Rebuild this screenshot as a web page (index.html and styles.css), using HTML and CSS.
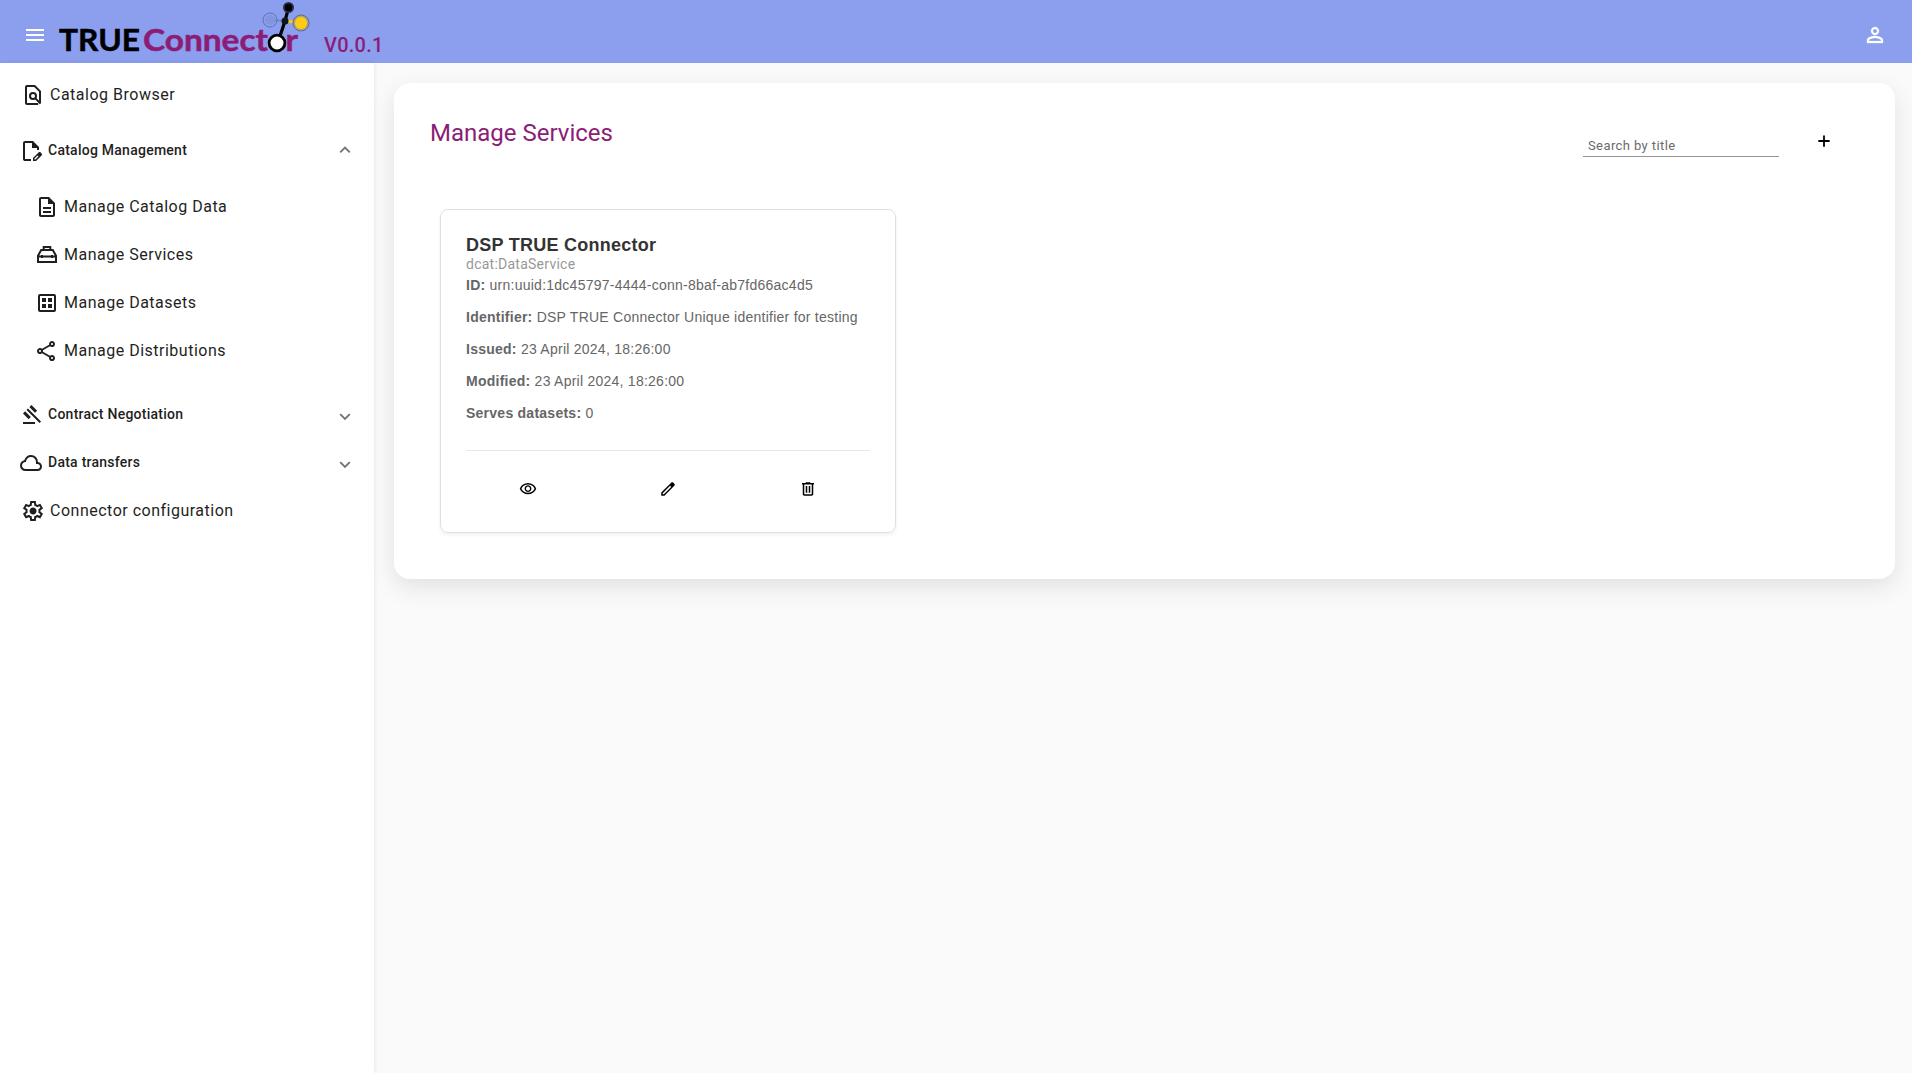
FILE: index.html
```html
<!DOCTYPE html>
<html lang="en">
<head>
<meta charset="utf-8">
<title>TRUE Connector</title>
<link rel="stylesheet" href="styles.css">
</head>
<body>
<header class="toolbar">
  <svg class="icon menu" viewBox="0 0 24 24"><path d="M3 18h18v-2H3v2zm0-5h18v-2H3v2zm0-7v2h18V6H3z"/></svg>
  <svg class="logo" viewBox="0 0 254 62" width="254" height="62">
    <text class="word black" x="1" y="51" textLength="81" lengthAdjust="spacingAndGlyphs">TRUE</text>
    <text class="word plum" x="85" y="51" textLength="125" lengthAdjust="spacingAndGlyphs">Connect</text>
    <text class="word plum" x="227.500" y="51" textLength="12.500" lengthAdjust="spacingAndGlyphs">r</text>
    <path d="M212 20L227 21" stroke="#7488cf" stroke-width="2"/>
    <path d="M227 21L243 22.500" stroke="#f9cb13" stroke-width="3"/>
    <circle cx="212" cy="20" r="5" fill="#8195e0"/>
    <circle cx="212" cy="20" r="7" fill="none" stroke="#6073b2" stroke-width="1"/>
    <circle cx="243" cy="23" r="8" fill="#a8a680" stroke="#626b84" stroke-width="1"/>
    <circle cx="243" cy="23" r="6" fill="#fc1"/>
    <path d="M230.500 8L227 21L221 39" fill="none" stroke="#000" stroke-width="3.200"/>
    <circle cx="227" cy="21" r="3.500" fill="#10131d"/>
    <circle cx="230.500" cy="7.500" r="5.500" fill="#273050"/>
    <circle cx="230.500" cy="7.500" r="3.700" fill="#000"/>
    <circle cx="219" cy="43" r="7.900" fill="#fff" stroke="#000" stroke-width="2.800"/>
  </svg>
  <span class="version">V0.0.1</span>
  <svg class="icon user" viewBox="0 0 24 24"><path stroke="currentColor" stroke-width=".3" d="M12 5.900c1.160 0 2.100.94 2.100 2.100s-.94 2.100-2.100 2.100S9.900 9.160 9.900 8s.94-2.100 2.100-2.100m0 9c2.970 0 6.100 1.460 6.100 2.100v1.100H5.900V17c0-.64 3.130-2.100 6.100-2.100M12 4C9.790 4 8 5.790 8 8s1.790 4 4 4 4-1.790 4-4-1.790-4-4-4zm0 9c-2.670 0-8 1.340-8 4v3h16v-3c0-2.660-5.330-4-8-4z"/></svg>
</header>
<div class="body">
  <nav class="sidebar">
    <a class="item">
      <svg class="icon line" viewBox="0 0 24 24"><path d="M19 20.500V8.400L13.600 3H6a1 1 0 0 0-1 1v16a1 1 0 0 0 1 1h11.200M14.100 15.100l5.400 5.400"/><circle cx="12" cy="13" r="3"/></svg>
      <span>Catalog Browser</span>
    </a>
    <div class="group open">
      <svg class="icon" viewBox="0 -960 960 960"><path d="M560-80v-123l221-220q9-9 20-13t22-4q12 0 23 4.500t20 13.500l37 37q8 9 12.500 20t4.500 22q0 11-4 22.500T903-300L683-80H560Zm300-263-37-37 37 37ZM620-140h38l121-122-18-19-19-18-122 121v38ZM240-80q-33 0-56.500-23.500T160-160v-640q0-33 23.500-56.500T240-880h320l240 240v120h-80v-80H520v-200H240v640h240v80H240Z"/></svg>
      <span>Catalog Management</span>
      <svg class="chevron" viewBox="0 0 12 12"><path d="M1.200 8.300L6 3.500l4.800 4.800"/></svg>
    </div>
    <div class="submenu">
      <a class="item">
        <svg class="icon" viewBox="0 0 24 24"><path d="M8 16h8v2H8zm0-4h8v2H8zm6-10H6c-1.100 0-2 .9-2 2v16c0 1.100.89 2 1.990 2H18c1.100 0 2-.9 2-2V8l-6-6zm4 18H6V4h7v5h5v11z"/></svg>
        <span>Manage Catalog Data</span>
      </a>
      <a class="item">
        <svg class="icon line" viewBox="0 0 24 24"><path d="M8.700 7V4h6.600v3M3 19V12.700L6.200 7h11.600L21 12.700V19zM3 13.500h18M7 12v3M17 12v3"/></svg>
        <span>Manage Services</span>
      </a>
      <a class="item">
        <svg class="icon" viewBox="0 0 24 24"><path fill-rule="evenodd" d="M5 3h14a2 2 0 0 1 2 2v14a2 2 0 0 1-2 2H5a2 2 0 0 1-2-2V5a2 2 0 0 1 2-2zm0 2v14h14V5zM7 7h4v4H7zm6 0h4v4h-4zm-6 6h4v4H7zm6 0h4v4h-4z"/></svg>
        <span>Manage Datasets</span>
      </a>
      <a class="item">
        <svg class="icon" viewBox="0 -960 960 960"><path d="M680-80q-50 0-85-35t-35-85q0-6 3-28L282-392q-16 15-37 23.500t-45 8.500q-50 0-85-35t-35-85q0-50 35-85t85-35q24 0 45 8.500t37 23.500l281-164q-2-7-2.500-13.500T560-760q0-50 35-85t85-35q50 0 85 35t35 85q0 50-35 85t-85 35q-24 0-45-8.500T598-672L317-508q2 7 2.500 13.500t.5 14.500q0 8-.5 14.500T317-452l281 164q16-15 37-23.500t45-8.500q50 0 85 35t35 85q0 50-35 85t-85 35Zm0-80q17 0 28.500-11.500T720-200q0-17-11.500-28.500T680-240q-17 0-28.500 11.500T640-200q0 17 11.500 28.500T680-160ZM200-440q17 0 28.500-11.500T240-480q0-17-11.500-28.500T200-520q-17 0-28.500 11.500T160-480q0 17 11.500 28.500T200-440Zm480-280q17 0 28.500-11.500T720-760q0-17-11.500-28.500T680-800q-17 0-28.500 11.500T640-760q0 17 11.500 28.500T680-720Z"/></svg>
        <span>Manage Distributions</span>
      </a>
    </div>
    <div class="group">
      <svg class="icon" viewBox="0 -960 960 960"><path d="M160-120v-80h480v80H160Zm226-194L160-540l84-86 228 226-86 86Zm254-254L414-796l86-84 226 226-86 86Zm184 408L302-682l56-56 522 522-56 56Z"/></svg>
      <span>Contract Negotiation</span>
      <svg class="chevron" viewBox="0 0 12 12"><path d="M1.200 5.200L6 10l4.800-4.800"/></svg>
    </div>
    <div class="group">
      <svg class="icon" viewBox="0 -960 960 960"><path d="M260-160q-91 0-155.500-63T40-377q0-78 47-139t123-78q25-92 100-149t170-57q117 0 198.500 81.500T760-520q69 8 114.500 59.500T920-340q0 75-52.500 127.500T740-160H260Zm0-80h480q42 0 71-29t29-71q0-42-29-71t-71-29h-60v-80q0-83-58.500-141.500T480-720q-83 0-141.500 58.500T280-520h-20q-58 0-99 41t-41 99q0 58 41 99t99 41Z"/></svg>
      <span>Data transfers</span>
      <svg class="chevron" viewBox="0 0 12 12"><path d="M1.200 5.200L6 10l4.800-4.800"/></svg>
    </div>
    <a class="item">
      <svg class="icon" viewBox="0 -960 960 960"><path d="m370-80-16-128q-13-5-24.500-12T307-235l-119 50L78-375l103-78q-1-7-1-13.500v-27q0-6.500 1-13.500L78-585l110-190 119 50q11-8 23-15t24-12l16-128h220l16 128q13 5 24.500 12t22.500 15l119-50 110 190-103 78q1 7 1 13.500v27q0 6.500-2 13.500l103 78-110 190-118-50q-11 8-23 15t-24 12L590-80H370Zm70-80h79l14-106q31-8 57.500-23.500T639-327l99 41 39-68-86-65q5-14 7-29.500t2-31.500q0-16-2-31.500t-7-29.500l86-65-39-68-99 42q-22-23-48.500-38.500T533-694l-13-106h-79l-14 106q-31 8-57.500 23.500T321-633l-99-41-39 68 86 64q-5 15-7 30t-2 32q0 16 2 31t7 30l-86 65 39 68 99-42q22 23 48.500 38.500T427-266l13 106Zm42-180q58 0 99-41t41-99q0-58-41-99t-99-41q-59 0-99.500 41T342-480q0 58 40.500 99t99.500 41Z"/></svg>
      <span>Connector configuration</span>
    </a>
  </nav>
  <main class="content">
    <section class="panel">
      <div class="panel-head">
        <h1 class="title">Manage Services</h1>
        <div class="search">Search by title</div>
        <svg class="add" viewBox="0 0 24 24"><path d="M19.500 13.200H13.200v6.300h-2.400V13.200H4.500v-2.400H10.800V4.500h2.400V10.800h6.300v2.400z"/></svg>
      </div>
      <article class="card">
        <h2 class="card-title">DSP TRUE Connector</h2>
        <div class="card-type">dcat:DataService</div>
        <p class="field"><b>ID:</b> urn:uuid:1dc45797-4444-conn-8baf-ab7fd66ac4d5</p>
        <p class="field"><b>Identifier:</b> DSP TRUE Connector Unique identifier for testing</p>
        <p class="field"><b>Issued:</b> 23 April 2024, 18:26:00</p>
        <p class="field"><b>Modified:</b> 23 April 2024, 18:26:00</p>
        <p class="field"><b>Serves datasets:</b> 0</p>
        <div class="actions">
          <svg viewBox="0 -960 960 960"><path d="M480-320q75 0 127.500-52.500T660-500q0-75-52.500-127.500T480-680q-75 0-127.500 52.500T300-500q0 75 52.500 127.500T480-320Zm0-72q-45 0-76.500-31.500T372-500q0-45 31.500-76.500T480-608q45 0 76.500 31.500T588-500q0 45-31.500 76.500T480-392Zm0 192q-146 0-266-81.500T40-500q54-137 174-218.500T480-800q146 0 266 81.500T920-500q-54 137-174 218.500T480-200Zm0-80q113 0 207.500-59.500T832-500q-50-101-144.500-160.500T480-720q-113 0-207.500 59.500T128-500q50 101 144.500 160.500T480-280Z"/></svg>
          <svg viewBox="0 -960 960 960"><path d="M200-200h57l391-391-57-57-391 391v57Zm-80 80v-170l528-527q12-11 26.500-17t30.500-6q16 0 31 6t26 18l55 56q12 11 17.500 26t5.500 30q0 16-5.500 30.500T817-647L290-120H120Z"/></svg>
          <svg viewBox="0 -960 960 960"><path d="M280-120q-33 0-56.500-23.500T200-200v-520h-40v-80h200v-40h240v40h200v80h-40v520q0 33-23.500 56.500T680-120H280Zm400-600H280v520h400v-520ZM360-280h80v-360h-80v360Zm160 0h80v-360h-80v360Z"/></svg>
        </div>
      </article>
    </section>
  </main>
</div>
</body>
</html>
```
FILE: styles.css
```css
* { box-sizing: border-box; }
body {
  margin: 0;
  height: 1073px;
  display: flex;
  flex-direction: column;
  font-family: Roboto, sans-serif;
  color: #1f1f23;
  background: #fafafa;
  overflow: hidden;
}
svg { display: block; flex: none; fill: currentColor; }
.icon { width: 24px; height: 24px; }
.line { fill: none; stroke: currentColor; stroke-width: 2; }

.toolbar {
  height: 63px;
  flex: none;
  display: flex;
  align-items: flex-start;
  padding: 0 25px 0 23px;
  background: #8c9eee;
  color: #fff;
}
.menu, .user { margin-top: 23px; }
.logo { margin-left: 11px; }
.word { font: 700 30.500px Lato, sans-serif; stroke-width: .5; }
.black { fill: #000; stroke: #000; }
.plum { fill: #8b1d77; stroke: #8b1d77; }
.version {
  margin: 33px 0 0 12px;
  font-size: 20px;
  line-height: 24px;
  font-weight: 500;
  letter-spacing: .25px;
  color: #8b1d77;
}
.user { margin-left: auto; }

.body { flex: 1; display: flex; }
.sidebar {
  width: 374px;
  padding-top: 7px;
  background: #fff;
  box-shadow: 1px 0 4px rgba(0, 0, 0, .07);
}
.item, .group { display: flex; align-items: center; height: 48px; }
.item { padding: 2px 0 0 21px; font-size: 16px; letter-spacing: .5px; }
.item span { margin: -2px 0 0 5px; }
.group { padding: 2px 23px 0 19px; font-size: 14px; font-weight: 500; letter-spacing: .25px; }
.group span { margin: -2px 0 0 5px; }
.group.open { height: 64px; }
.submenu { padding-bottom: 16px; }
.submenu .item { padding-left: 35px; }
.chevron {
  width: 12px;
  height: 12px;
  margin-left: auto;
  fill: none;
  stroke: #757575;
  stroke-width: 1.900;
}
.open .chevron { margin-bottom: 3px; }

.content { flex: 1; padding: 20px 17px 0 20px; }
.panel {
  height: 496px;
  padding: 32px 36px;
  border-radius: 16px;
  background: #fff;
  box-shadow: 0 8px 24px rgba(0, 0, 0, .1);
}
.panel-head { display: flex; align-items: flex-start; height: 94px; }
.title { margin: 2px 0 0; font-size: 24px; line-height: 32px; font-weight: 400; color: #8b1d77; }
.search {
  width: 196px;
  height: 26px;
  margin: 16px 36px 0 auto;
  padding: 5px 5px 0;
  border-bottom: 1px solid #949494;
  font-size: 13px;
  line-height: 20px;
  letter-spacing: .4px;
  color: #6b6b6b;
}
.add { width: 18px; height: 18px; margin: 17px 26px 0 0; color: #000; }

.card {
  width: 456px;
  height: 324px;
  margin-left: 10px;
  padding: 24px 25px 0;
  border: 1px solid #e0e0e0;
  border-radius: 8px;
  box-shadow: 0 2px 4px rgba(0, 0, 0, .06);
  font-family: "Liberation Sans", Arial, sans-serif;
}
.card-title { margin: 0; font-size: 18px; line-height: 22px; font-weight: 700; letter-spacing: .25px; color: #333; }
.card-type { font: 14px/16px Roboto, sans-serif; letter-spacing: .25px; color: #999; }
.field { margin: 0 0 12px; font-size: 14px; line-height: 20px; letter-spacing: .25px; color: #666; white-space: nowrap; }
.card-type + .field { margin-top: 3px; }
.actions {
  display: grid;
  grid-template-columns: repeat(3, 1fr);
  gap: 16px;
  justify-items: center;
  margin-top: 27px;
  padding-top: 29px;
  border-top: 1px solid #e8e8e8;
  color: #000;
}
.actions svg { width: 18px; height: 18px; }
```
